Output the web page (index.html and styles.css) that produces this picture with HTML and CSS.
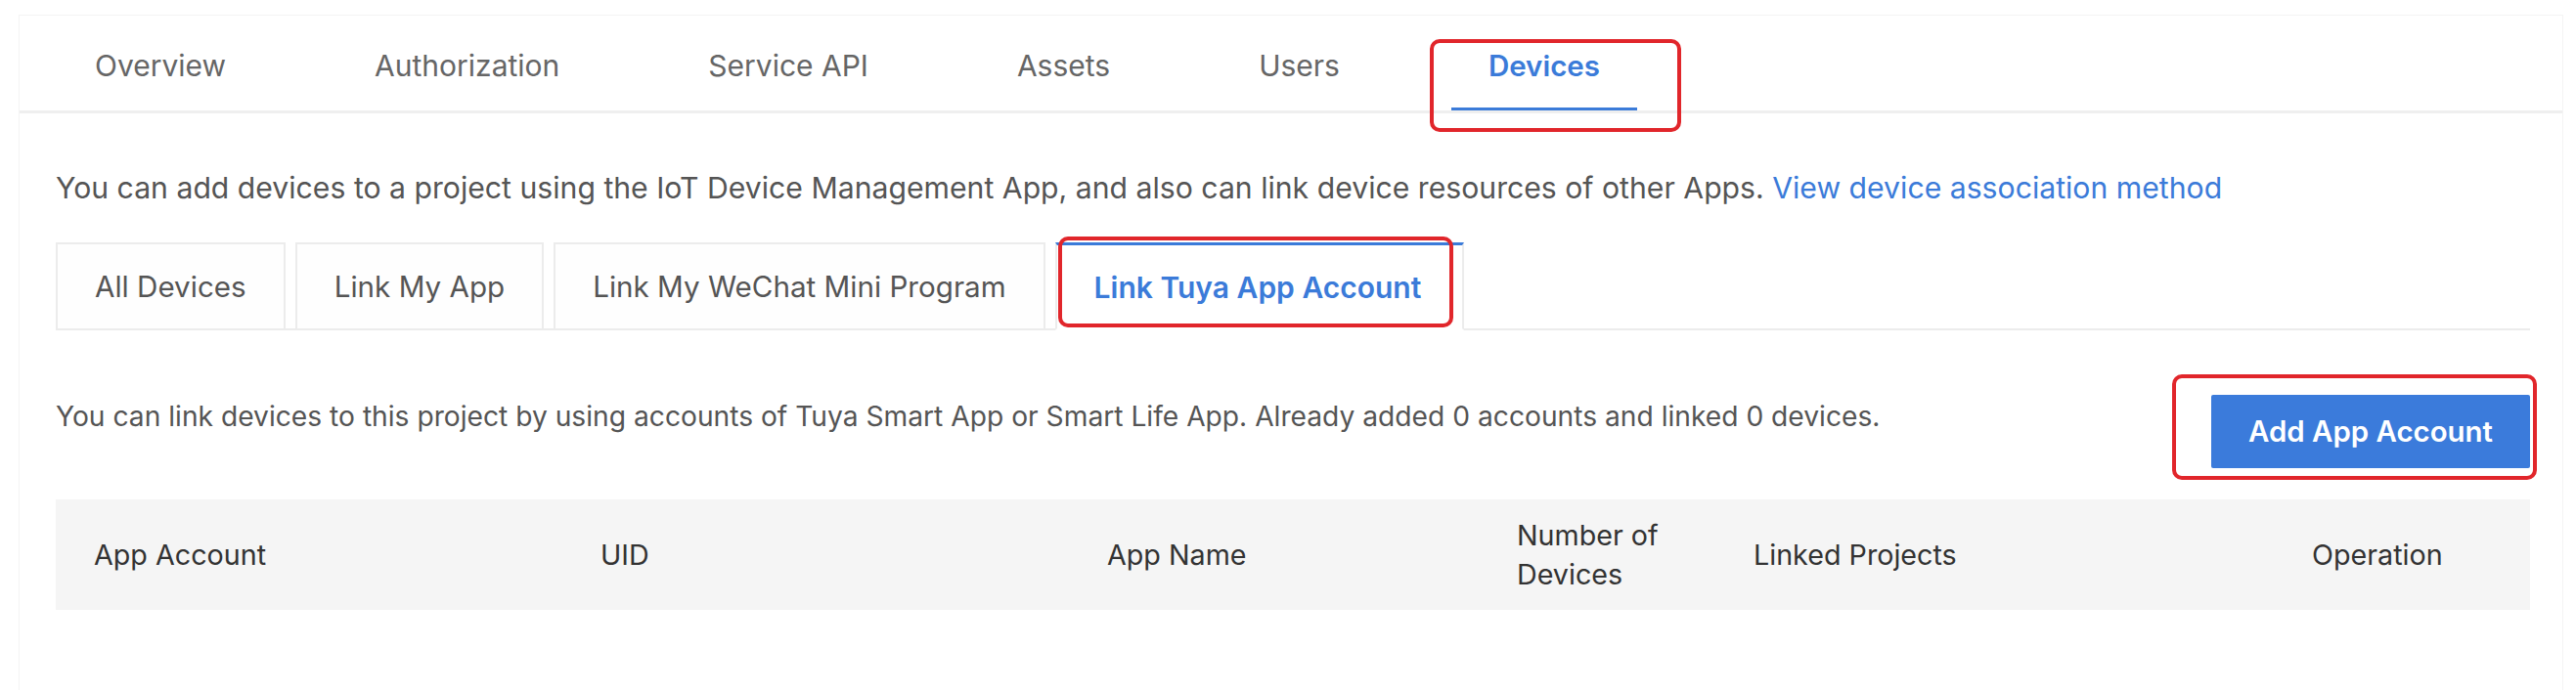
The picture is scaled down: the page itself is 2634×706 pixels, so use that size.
FILE: index.html
```html
<!DOCTYPE html>
<html lang="en">
<head>
<meta charset="utf-8">
<title>Devices</title>
<link rel="stylesheet" href="styles.css">
</head>
<body>
<div class="panel">
  <nav class="topnav">
    <div class="nav-item">Overview</div>
    <div class="nav-item">Authorization</div>
    <div class="nav-item">Service API</div>
    <div class="nav-item">Assets</div>
    <div class="nav-item">Users</div>
    <div class="nav-item active">Devices<span class="mark mark-nav"></span></div>
  </nav>
  <div class="content">
    <p class="intro">You can add devices to a project using the IoT Device Management App, and also can link device resources of other Apps. <a class="link" href="#">View device association method</a></p>
    <div class="cardtabs">
      <div class="ctab">All Devices</div>
      <div class="ctab">Link My App</div>
      <div class="ctab">Link My WeChat Mini Program</div>
      <div class="ctab active">Link Tuya App Account<span class="mark mark-tab"></span></div>
    </div>
    <div class="summary">
      <p class="summary-text">You can link devices to this project by using accounts of Tuya Smart App or Smart Life App. Already added 0 accounts and linked 0 devices.</p>
      <div class="btn-wrap">
        <button class="btn-primary">Add App Account</button>
        <span class="mark mark-btn"></span>
      </div>
    </div>
    <div class="table">
      <div class="thead">
        <div class="th">App Account</div>
        <div class="th">UID</div>
        <div class="th">App Name</div>
        <div class="th">Number of Devices</div>
        <div class="th">Linked Projects</div>
        <div class="th">Operation</div>
      </div>
    </div>
  </div>
</div>
</body>
</html>
```
FILE: styles.css
```css
* { box-sizing: border-box; }
html, body { margin: 0; padding: 0; background: #ffffff; }
body {
  font-family: Inter, "Liberation Sans", Arial, sans-serif;
  color: #555555;
  font-size: 28px;
}
.panel {
  margin: 15px 13px 0 19px;
  border: 1px solid #f4f4f4;
  border-bottom: none;
  min-height: 691px;
}
.topnav {
  display: flex;
  gap: 76px;
  padding: 5px 0 0 39px;
  border-bottom: 3px solid #efefef;
}
.nav-item {
  position: relative;
  height: 92px;
  padding: 0 38px;
  display: flex;
  align-items: center;
  color: #666666;
  font-size: 30px;
}
.nav-item.active {
  color: #3b7bd9;
  font-weight: 600;
  font-size: 29.5px;
}
.nav-item.active::after {
  content: "";
  position: absolute;
  left: 0;
  right: 0;
  bottom: 0;
  height: 3px;
  background: #3b7bd9;
}
.mark {
  position: absolute;
  border: 4px solid #e1262b;
  border-radius: 10px;
  pointer-events: none;
}
.mark-nav { left: -22px; right: -45px; top: 19px; bottom: -22px; }
.content {
  padding: 0 33px 0 37px;
}
.intro {
  margin: 56px 0 0 0;
  line-height: 40px;
  font-size: 30.2px;
  color: #555555;
}
.link { color: #3b7bd9; text-decoration: none; }
.cardtabs {
  display: flex;
  gap: 10px;
  margin-top: 36px;
  border-bottom: 2px solid #ececec;
}
.ctab {
  position: relative;
  height: 90px;
  margin-bottom: -2px;
  padding: 0 38px;
  display: flex;
  align-items: center;
  border: 2px solid #ececec;
  background: #fefefe;
  color: #555555;
  font-size: 29.6px;
}
.ctab.active {
  padding: 0 42px 0 38px;
  border-top: 3px solid #3b7bd9;
  border-bottom-color: #ffffff;
  background: #ffffff;
  color: #3b7bd9;
  font-weight: 600;
  font-size: 30px;
}
.mark-tab { left: 1px; right: 9px; top: -9px; bottom: 1px; }
.summary {
  display: flex;
  justify-content: space-between;
  align-items: flex-start;
  margin-top: 66px;
}
.summary-text {
  margin: 0;
  line-height: 44px;
  font-size: 28.2px;
  color: #555555;
}
.btn-wrap { position: relative; }
.btn-primary {
  display: block;
  width: 326px;
  height: 75px;
  border: none;
  border-radius: 2px;
  background: #3b7bdb;
  color: #ffffff;
  font-family: inherit;
  font-size: 29.4px;
  font-weight: 600;
}
.mark-btn { left: -40px; right: -7px; top: -21px; bottom: -12px; }
.table { margin-top: 32px; }
.thead {
  display: grid;
  grid-template-columns: 518px 518px 419px 242px 571px 1fr;
  height: 113px;
  background: #f5f5f5;
  align-items: center;
}
.th {
  padding: 0 39px;
  color: #333333;
  font-size: 28.7px;
  line-height: 40px;
}
```
